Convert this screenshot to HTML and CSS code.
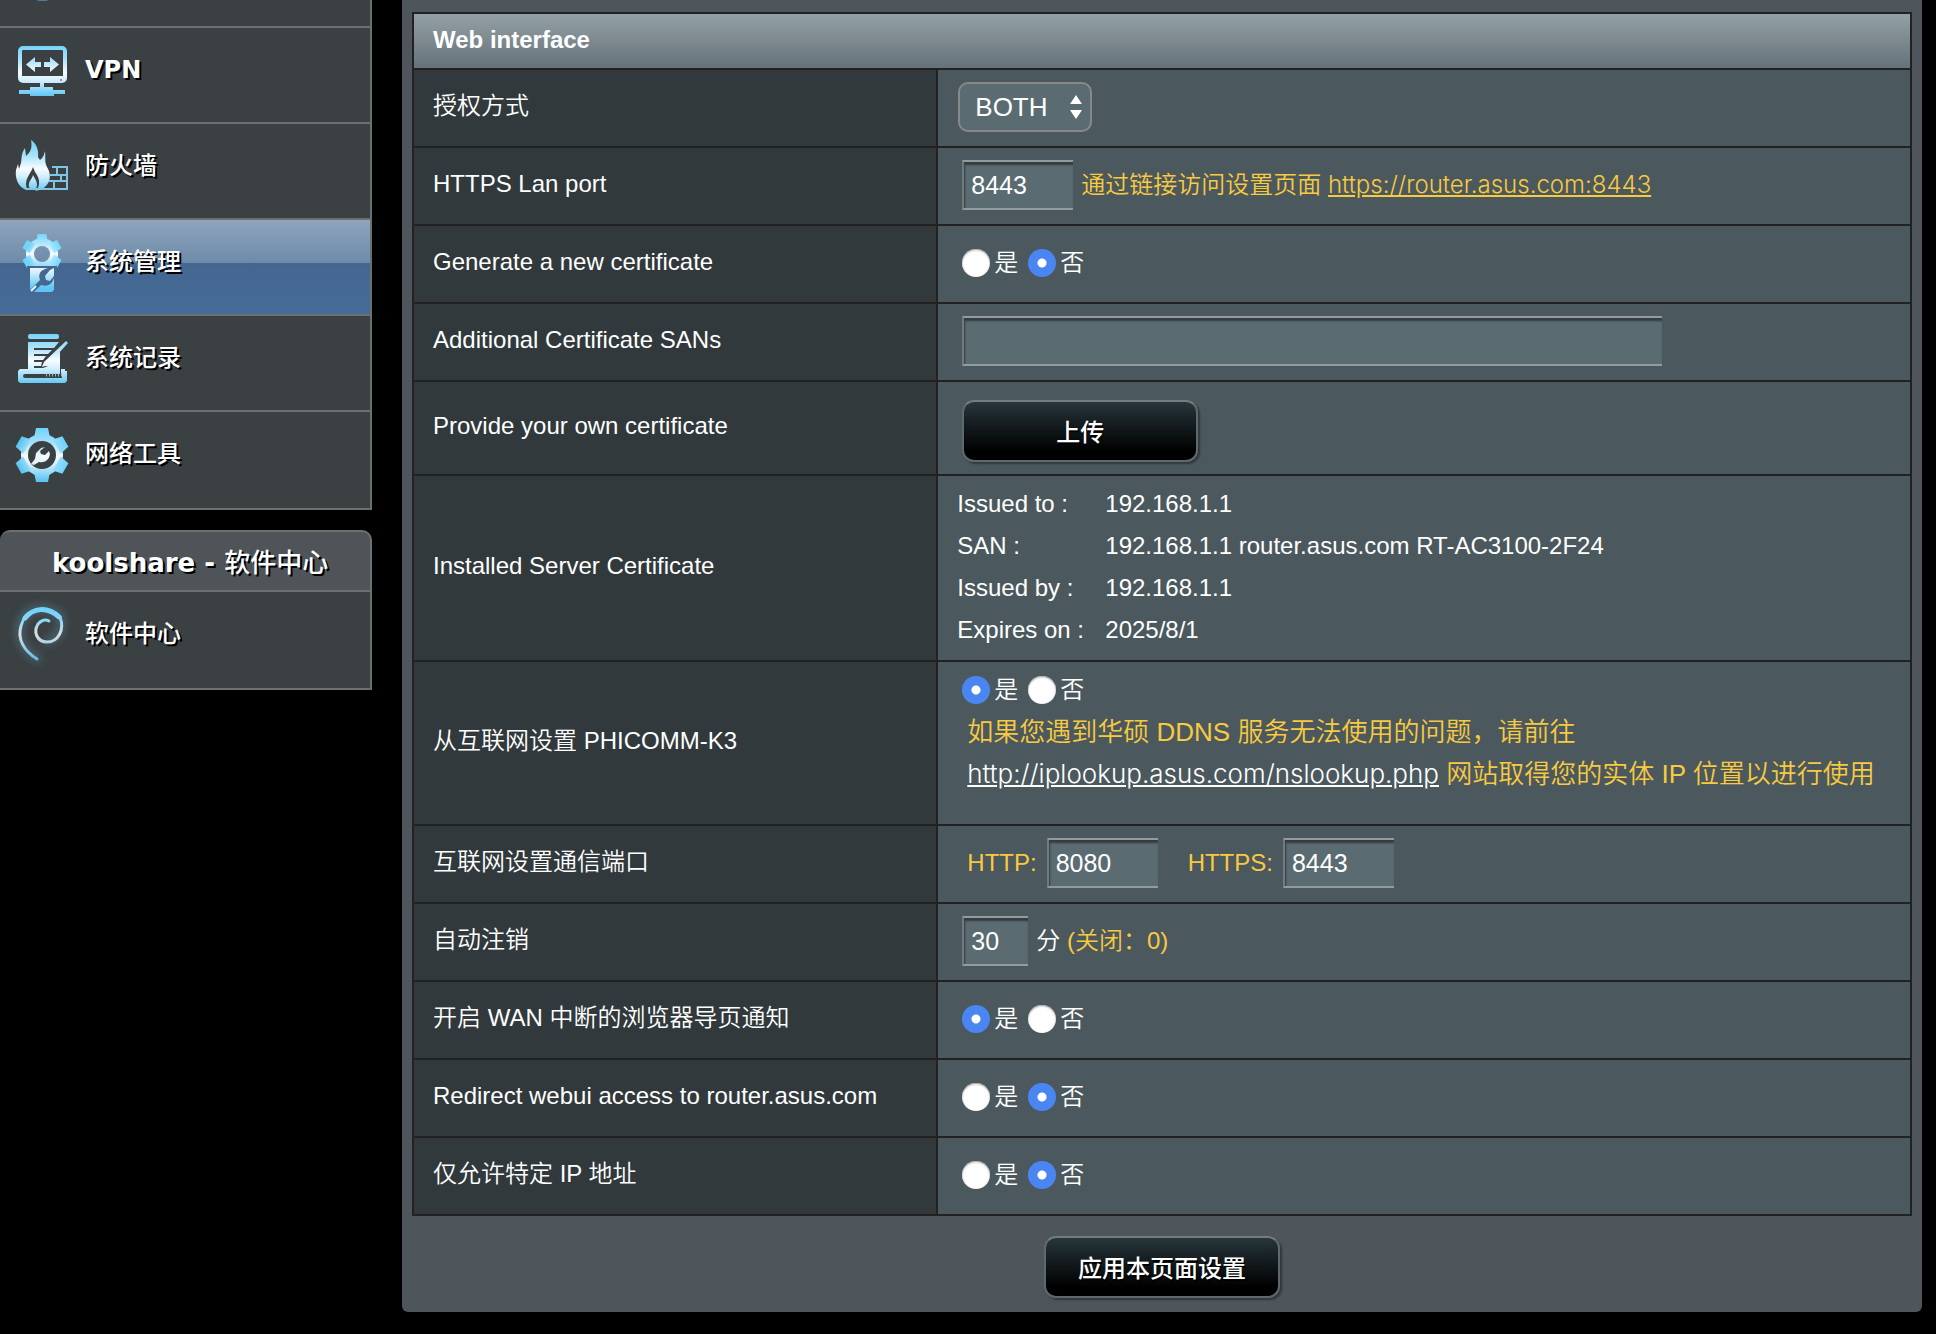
FILE: index.html
```html
<!DOCTYPE html>
<html lang="zh-CN">
<head>
<meta charset="utf-8">
<title>系统管理</title>
<link rel="stylesheet" href="styles.css">
</head>
<body>
<svg class="defs" aria-hidden="true">
  <defs>
    <linearGradient id="ice" gradientUnits="userSpaceOnUse" x1="0" y1="16" x2="0" y2="68">
      <stop offset="0" stop-color="#6fd2fb"/>
      <stop offset=".3" stop-color="#a9e2fb"/>
      <stop offset=".55" stop-color="#f8fcff"/>
      <stop offset=".7" stop-color="#d3effc"/>
      <stop offset="1" stop-color="#5fc6f3"/>
    </linearGradient>
    <linearGradient id="ice-gear" gradientUnits="userSpaceOnUse" x1="0" y1="14" x2="0" y2="50">
      <stop offset="0" stop-color="#72d6fc"/>
      <stop offset=".55" stop-color="#f4fbff"/>
      <stop offset="1" stop-color="#72d2f8"/>
    </linearGradient>
    <linearGradient id="ice-swirl" gradientUnits="userSpaceOnUse" x1="0" y1="15" x2="0" y2="69">
      <stop offset="0" stop-color="#6fd2fb"/>
      <stop offset=".25" stop-color="#8ad6f5"/>
      <stop offset=".5" stop-color="#dcdfe2"/>
      <stop offset="1" stop-color="#5fb9e0"/>
    </linearGradient>
    <filter id="glow" x="-50%" y="-50%" width="200%" height="200%"><feGaussianBlur stdDeviation="4"/></filter>
  </defs>
</svg>
<div class="page">
  <nav class="sidebar">
    <ul class="menu">
      <li class="menu-item menu-item-cut">
        <svg class="menu-icon" viewBox="0 0 80 94"><path d="M36 0h13l-3 1h-7z" fill="#4f7f96"/></svg>
      </li>
      <li class="menu-item">
        <svg class="menu-icon" viewBox="0 0 80 94" fill="url(#ice)">
          <path fill-rule="evenodd" d="M23 18h39a5 5 0 0 1 5 5v27a5 5 0 0 1-5 5H23a5 5 0 0 1-5-5V23a5 5 0 0 1 5-5zm0 4a1 1 0 0 0-1 1v25h41V23a1 1 0 0 0-1-1z"/>
          <path d="M26 36.500l9-7.500v5h6v5h-6v5zM59 36.500l-9-7.500v5h-6v5h6v5z"/>
          <path d="M40 55h4v4h9v3h12v4H54v2H30v-2H19v-4h11v-3h10z"/>
          <circle cx="61" cy="52" r="1" fill="#6d7c86"/>
        </svg>
        <a class="menu-link menu-link-latin" href="#vpn">VPN</a>
      </li>
      <li class="menu-item">
        <svg class="menu-icon" viewBox="0 0 80 94" fill="url(#ice)">
          <path fill-rule="evenodd" d="M26 66C17 62 15 53 16 46l2-6 1 5 2-6c1-6 0-9 4-15l1 8c6-5 6-10 5-16 5 3 8 10 7 17l2 3c3-2 4-5 5-9 1 7-1 10 2 16 5 8 4 18-7 23l-5 1c6-4 5-13 0-19l-2-5c-2 6-7 10-7 17 0 3 1 5 2 6z"/>
          <path d="M33 51c2 4 4 6 4 10 0 3-2 4-4 5-3-1-5-3-4-6 0-3 3-5 4-9z"/>
          <path d="M27 65h41M52 43h15v22M57 43v8h10M49 57h18M61 51v6M54 57v8M50 51h7" fill="none" stroke="#7fc5e6" stroke-width="2"/>
        </svg>
        <a class="menu-link" href="#firewall">防火墙</a>
      </li>
      <li class="menu-item menu-item-active">
        <svg class="menu-icon" viewBox="0 0 80 94" fill="url(#ice-gear)">
          <mask id="hole-a"><rect width="80" height="94" fill="#fff"/><circle cx="42" cy="34" r="8" fill="#000"/><rect x="27" y="46" width="30" height="26" fill="#000"/></mask>
          <g mask="url(#hole-a)">
            <circle cx="42" cy="34" r="16"/>
            <path id="teeth-a" d="M37.500 14h9l1 9h-11zM36.500 45h11l-1 9h-9z"/>
            <use href="#teeth-a" transform="rotate(60 42 34)"/>
            <use href="#teeth-a" transform="rotate(120 42 34)"/>
          </g>
          <path d="M30 48h18c-8 2-10 6-8 12l-9 9h-1zM50 50l-5 6 1 4 4 1 4-5v14l-2 2H34l7-7c6 2 11 0 13-7V48z" fill="url(#ice)"/>
          <path d="M31 71l5-5" stroke="#eaf7fd" stroke-width="2"/>
        </svg>
        <a class="menu-link" href="#administration">系统管理</a>
      </li>
      <li class="menu-item">
        <svg class="menu-icon" viewBox="0 0 80 94" fill="url(#ice)">
          <rect x="28" y="18" width="31" height="5" rx="2"/>
          <path fill-rule="evenodd" d="M28 26h31l-5 6H34v2h18l-4 4H34v2h12l-3 4h-9v2h8l-1 4 4-1 15-15v24H28zM34 50v2h9l5-2z"/>
          <path d="M66 25l2 2-20 22-6 2 2-5z"/>
          <path fill-rule="evenodd" d="M20 53h8v5h-3a2 2 0 1 0 0 4h37v-4h-1v-5h4v2h2v10l-2 2H20l-2-2V55z"/>
          <path d="M46 59h16" stroke="#9db4c0" stroke-width="3" stroke-dasharray="1 2"/>
        </svg>
        <a class="menu-link" href="#syslog">系统记录</a>
      </li>
      <li class="menu-item menu-item-last">
        <svg class="menu-icon" viewBox="0 0 80 94" fill="url(#ice)">
          <mask id="hole-b"><rect width="80" height="94" fill="#fff"/><circle cx="42" cy="43" r="14" fill="#000"/></mask>
          <g mask="url(#hole-b)">
            <circle cx="42" cy="43" r="21"/>
            <path id="teeth-b" d="M36 16h12l2 10H34zM34 60h16l-2 10H36z"/>
            <use href="#teeth-b" transform="rotate(60 42 43)"/>
            <use href="#teeth-b" transform="rotate(120 42 43)"/>
          </g>
          <path d="M45 35l-4 1-5 5-1 6-4 5 3 1 5-3c6 1 10-2 11-8l-1-3-4 4-4-1-1-3z"/>
        </svg>
        <a class="menu-link" href="#nettools">网络工具</a>
      </li>
    </ul>
    <section class="menu-group">
      <h2 class="menu-title"><span class="latin">koolshare - </span>软件中心</h2>
      <ul class="menu">
        <li class="menu-item menu-item-last">
          <svg class="menu-icon" viewBox="0 0 80 94" fill="none" stroke="url(#ice-swirl)" stroke-linecap="round">
            <path d="M38 67C22 57 16 44 21 30 27 14 50 12 60 24c4 12-2 24-13 25" stroke="#5b9bb8" stroke-width="6" opacity=".5" filter="url(#glow)"/>
            <path d="M37 67C24 59 17 47 21 34 25 17 46 11 60 25" stroke-width="3"/>
            <path d="M25 26C33 16 47 14 59 25" stroke-width="5"/>
            <path d="M60 25c5 13-2 25-13 25-10 0-14-10-9-18 3-4 8-5 11-3" stroke-width="3"/>
          </svg>
          <a class="menu-link" href="#software">软件中心</a>
        </li>
      </ul>
    </section>
  </nav>

  <main class="panel">
    <form class="form" action="#">
      <table class="settings">
        <colgroup>
          <col class="col-name">
          <col>
        </colgroup>
        <thead>
          <tr><th colspan="2" class="settings-head">Web interface</th></tr>
        </thead>
        <tbody>
          <tr>
            <th scope="row"><label for="auth">授权方式</label></th>
            <td>
              <span class="select">
                <select id="auth"><option>HTTP</option><option>HTTPS</option><option selected>BOTH</option></select>
                <svg class="select-arrows" viewBox="0 0 12 24" fill="#fff"><path d="M6 0l6 9H0zM6 24l6-9H0z"/></svg>
              </span>
            </td>
          </tr>
          <tr>
            <th scope="row"><label for="lan-port">HTTPS Lan port</label></th>
            <td>
              <div class="line">
                <input class="field field-port" id="lan-port" type="text" value="8443">
                <span class="hint">通过链接访问设置页面 <a class="hint-link" href="#router">https://router.asus.com:8443</a></span>
              </div>
            </td>
          </tr>
          <tr>
            <th scope="row">Generate a new certificate</th>
            <td>
              <div class="line choices">
                <label><input type="radio" name="gen">是</label>
                <label><input type="radio" name="gen" checked>否</label>
              </div>
            </td>
          </tr>
          <tr>
            <th scope="row"><label for="sans">Additional Certificate SANs</label></th>
            <td><div class="line"><input class="field field-wide" id="sans" type="text"></div></td>
          </tr>
          <tr>
            <th scope="row">Provide your own certificate</th>
            <td class="cell-button"><div class="line"><button class="button" type="button">上传</button></div></td>
          </tr>
          <tr>
            <th scope="row">Installed Server Certificate</th>
            <td class="cell-cert">
              <dl class="cert">
                <dt>Issued to :</dt><dd>192.168.1.1</dd>
                <dt>SAN :</dt><dd>192.168.1.1 router.asus.com RT-AC3100-2F24</dd>
                <dt>Issued by :</dt><dd>192.168.1.1</dd>
                <dt>Expires on :</dt><dd>2025/8/1</dd>
              </dl>
            </td>
          </tr>
          <tr>
            <th scope="row">从互联网设置 PHICOMM-K3</th>
            <td class="cell-wan">
              <div class="line choices">
                <label><input type="radio" name="wan" checked>是</label>
                <label><input type="radio" name="wan">否</label>
              </div>
              <p class="note">如果您遇到华硕 DDNS 服务无法使用的问题，请前往<br><a class="note-link" href="#nslookup">http://iplookup.asus.com/nslookup.php</a> 网站取得您的实体 IP 位置以进行使用</p>
            </td>
          </tr>
          <tr>
            <th scope="row">互联网设置通信端口</th>
            <td>
              <div class="ports">
                <label class="port">HTTP: <input class="field field-port" type="text" value="8080"></label>
                <label class="port">HTTPS: <input class="field field-port" type="text" value="8443"></label>
              </div>
            </td>
          </tr>
          <tr>
            <th scope="row"><label for="logout">自动注销</label></th>
            <td>
              <div class="line">
                <input class="field field-short" id="logout" type="text" value="30">
                <span>分 <span class="hint">(关闭：0)</span></span>
              </div>
            </td>
          </tr>
          <tr>
            <th scope="row">开启 WAN 中断的浏览器导页通知</th>
            <td>
              <div class="line choices">
                <label><input type="radio" name="notice" checked>是</label>
                <label><input type="radio" name="notice">否</label>
              </div>
            </td>
          </tr>
          <tr>
            <th scope="row">Redirect webui access to router.asus.com</th>
            <td>
              <div class="line choices">
                <label><input type="radio" name="redirect">是</label>
                <label><input type="radio" name="redirect" checked>否</label>
              </div>
            </td>
          </tr>
          <tr>
            <th scope="row">仅允许特定 IP 地址</th>
            <td>
              <div class="line choices">
                <label><input type="radio" name="restrict">是</label>
                <label><input type="radio" name="restrict" checked>否</label>
              </div>
            </td>
          </tr>
        </tbody>
      </table>
      <button class="button" type="submit">应用本页面设置</button>
    </form>
  </main>
</div>
</body>
</html>
```
FILE: styles.css
```css
* {
  box-sizing: border-box;
}

body {
  margin: 0;
  background: #000;
  color: #fff;
  font: 350 24px/32px "Liberation Sans", "Noto Sans CJK SC DemiLight", "Noto Sans CJK SC", sans-serif;
}

.defs {
  position: absolute;
  width: 0;
  height: 0;
}

.page {
  display: flex;
  align-items: flex-start;
  gap: 30px;
  padding-right: 14px;
}

/* Sidebar */

.sidebar {
  flex: none;
  width: 372px;
}

.menu {
  margin: 0;
  padding: 0;
  list-style: none;
  border-right: 2px solid #6b7071;
}

.menu-item {
  display: flex;
  align-items: flex-start;
  gap: 5px;
  height: 96px;
  overflow: hidden;
  background: #3b4042;
  border-bottom: 2px solid #6b7071;
}

.menu-item-cut {
  height: 28px;
}

.menu-item-last {
  height: 98px;
}

.menu-item-active {
  background: linear-gradient(#8fa4bd, #6d8ba8 46%, #44678f 46%, #446b98);
}

.menu-icon {
  flex: none;
  width: 80px;
  height: 94px;
}

.menu-link {
  padding-top: 26px;
  color: #fff;
  font-family: "DejaVu Sans", "Noto Sans CJK SC", sans-serif;
  font-weight: 500;
  text-decoration: none;
  text-shadow: 2px 2px 0 #000;
}

.menu-link-latin,
.latin {
  font-weight: 700;
}

.menu-group {
  margin-top: 20px;
}

.menu-title {
  height: 62px;
  margin: 0;
  padding: 14px 0 0 52px;
  border: 2px solid #6b7071;
  border-left: 0;
  border-radius: 10px 10px 0 0;
  background: #4f5458;
  font: 500 26px/34px "DejaVu Sans", "Noto Sans CJK SC", sans-serif;
  text-shadow: 2px 2px 0 #000;
}

/* Settings panel */

.panel {
  flex: 1;
  padding: 12px 10px 14px;
  border-radius: 0 0 6px 6px;
  background: #4e565c;
}

.form {
  display: flex;
  flex-direction: column;
  align-items: center;
  gap: 20px;
}

.settings {
  width: 100%;
  table-layout: fixed;
  border-collapse: collapse;
  border: 2px solid #222;
}

.col-name {
  width: 35%;
}

.settings th,
.settings td {
  height: 78px;
  padding: 10px 19px 14px;
  border: 2px solid #222;
  text-align: left;
  vertical-align: middle;
}

.settings th {
  background: #31393c;
  font-weight: 350;
}

.settings td {
  padding: 12px 20px 14px;
  background: #4b595e;
}

.settings .settings-head {
  height: 56px;
  padding: 10px 19px 12px;
  background: linear-gradient(#93a0a4, #66727a);
  font-weight: 700;
}

.settings .cell-button {
  height: 94px;
  padding: 18px 20px 12px;
}

.settings .cell-cert {
  padding: 7px 19px 9px;
}

.settings .cell-wan {
  padding: 7px 20px 29px;
}

.line {
  display: flex;
  align-items: center;
  gap: 8px;
  padding-left: 4px;
}

.choices {
  gap: 10px;
  min-height: 42px;
}

.choices label {
  display: flex;
  align-items: center;
  gap: 4px;
}

input[type="radio"] {
  appearance: none;
  width: 28px;
  height: 28px;
  margin: 0;
  border-radius: 50%;
  background: #fff;
  box-shadow: inset 0 1px 2px #999;
}

input[type="radio"]:checked {
  background: radial-gradient(circle, #fff 4px, #4a86f2 5px);
  box-shadow: none;
}

.select {
  display: block;
  position: relative;
  width: 134px;
  height: 50px;
}

.select select {
  appearance: none;
  width: 100%;
  height: 100%;
  padding: 0 15px;
  border: 2px solid #888;
  border-radius: 10px;
  background: #5b6b72;
  color: #fff;
  font: 26px/32px "Liberation Sans", sans-serif;
}

.select-arrows {
  position: absolute;
  top: 13px;
  right: 10px;
  width: 12px;
  height: 24px;
  pointer-events: none;
}

.field {
  height: 50px;
  padding: 0 7px;
  border: solid #929c9f;
  border-width: 2px 0 2px 2px;
  border-left-color: #707b7f;
  border-radius: 0;
  background: #5b6b72;
  box-shadow: inset 1px 3px 2px #343c3f;
  color: #fff;
  font: 25px/32px "Liberation Sans", sans-serif;
}

.field-port {
  width: 111px;
}

.field-short {
  width: 66px;
}

.field-wide {
  width: 700px;
}

.hint,
.port,
.note {
  color: #f8ca40;
}

.hint-link,
.note-link {
  color: inherit;
  font-family: Inter, "Liberation Sans", sans-serif;
  font-weight: 350;
}

.note-link {
  color: #fff;
}

.cert {
  display: grid;
  grid-template-columns: 148px 1fr;
  margin: 0;
  line-height: 42px;
}

.cert dd {
  margin: 0;
}

.note {
  margin: 0;
  padding-left: 9px;
  font-size: 26px;
  line-height: 42px;
  white-space: nowrap;
}

.ports {
  display: flex;
  gap: 30px;
  padding-left: 9px;
}

.port {
  display: flex;
  align-items: center;
  gap: 10px;
}

.button {
  width: 236px;
  height: 62px;
  padding: 0;
  border: 2px solid #5d696d;
  border-top-color: #727d80;
  border-radius: 12px;
  background: linear-gradient(#27363b, #1b2529 25%, #000 85%);
  box-shadow: 2px 2px 2px #30383b;
  color: #fff;
  font: 500 24px/32px "Noto Sans CJK SC", sans-serif;
  text-shadow: 1px 2px 0 #000;
}
```
